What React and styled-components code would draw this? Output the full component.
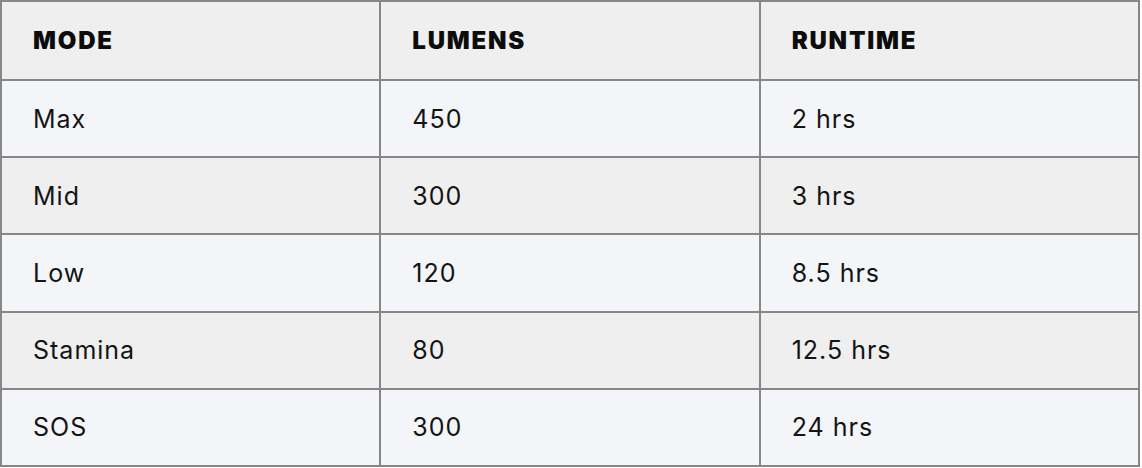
import styled, { createGlobalStyle } from 'styled-components'

const GlobalStyle = createGlobalStyle`
    body{
        margin: 0;
        background: #ffffff;
        font-family: Inter, "Noto Sans", sans-serif;
        color: #111111;
    }
`

const rows = [
    { mode: 'Max', lumens: '450', runtime: '2 hrs' },
    { mode: 'Mid', lumens: '300', runtime: '3 hrs' },
    { mode: 'Low', lumens: '120', runtime: '8.5 hrs' },
    { mode: 'Stamina', lumens: '80', runtime: '12.5 hrs' },
    { mode: 'SOS', lumens: '300', runtime: '24 hrs' },
]

const App = () => {
    return (
        <>
            <GlobalStyle />
            <Table>
                <thead>
                    <Row>
                        <Head>MODE</Head>
                        <Head>LUMENS</Head>
                        <Head>RUNTIME</Head>
                    </Row>
                </thead>
                <tbody>
                    {rows.map((row, i) => (
                        <Row key={row.mode} $odd={i % 2 === 0}>
                            <Cell>{row.mode}</Cell>
                            <Cell>{row.lumens}</Cell>
                            <Cell>{row.runtime}</Cell>
                        </Row>
                    ))}
                </tbody>
            </Table>
        </>
    )
}

const Table = styled.table`
    width: 1140px;
    border-collapse: collapse;
    table-layout: fixed;
    margin: 0;
`

const Row = styled.tr`
    background: ${p => (p.$odd ? '#f3f5f9' : '#efefef')};
`

const Head = styled.th`
    height: 77px;
    padding: 0 31px;
    border: 2px solid #878787;
    text-align: left;
    vertical-align: middle;
    font-size: 24px;
    font-weight: 900;
    letter-spacing: 1.8px;
    color: #0c0c0c;
`

const Cell = styled.td`
    height: 75.2px;
    padding: 0 31px;
    border: 2px solid #878787;
    vertical-align: middle;
    font-size: 25px;
    font-weight: 400;
    letter-spacing: 1px;
    color: #141414;
`

export default App
